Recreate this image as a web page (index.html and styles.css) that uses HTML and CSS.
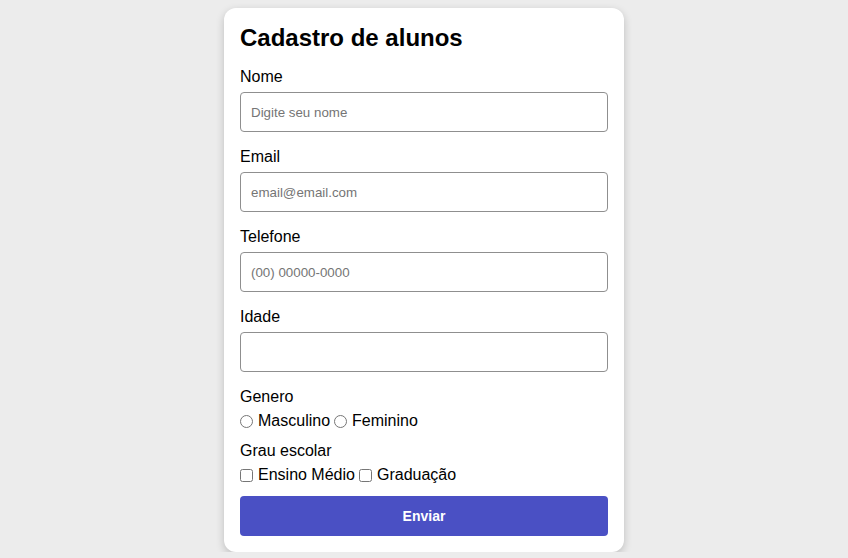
FILE: index.html
```html
<!DOCTYPE html>
<html lang="pt">
<head>
<meta charset="utf-8">
<title>Cadastro de alunos</title>
<link rel="stylesheet" href="styles.css">
</head>
<body>
<main class="card">
  <h2 class="title">Cadastro de alunos</h2>
  <form class="form">
    <div class="field">
      <label class="label" for="nome">Nome</label>
      <input class="input" id="nome" type="text" placeholder="Digite seu nome">
    </div>
    <div class="field">
      <label class="label" for="email">Email</label>
      <input class="input" id="email" type="email" placeholder="email@email.com">
    </div>
    <div class="field">
      <label class="label" for="tel">Telefone</label>
      <input class="input" id="tel" type="tel" placeholder="(00) 00000-0000">
    </div>
    <div class="field">
      <label class="label" for="idade">Idade</label>
      <input class="input" id="idade" type="number">
    </div>
    <div class="field field-choice">
      <span class="label">Genero</span>
      <div class="options">
        <label class="option"><input type="radio" name="genero" class="choice">Masculino</label>
        <label class="option"><input type="radio" name="genero" class="choice">Feminino</label>
      </div>
    </div>
    <div class="field field-choice">
      <span class="label">Grau escolar</span>
      <div class="options">
        <label class="option"><input type="checkbox" class="choice">Ensino Médio</label>
        <label class="option"><input type="checkbox" class="choice">Graduação</label>
      </div>
    </div>
    <button class="submit" type="button">Enviar</button>
  </form>
</main>
</body>
</html>
```
FILE: styles.css
```css
html, body {
  margin: 0;
  padding: 0;
}
body {
  background: #ececec;
  font-family: "Liberation Sans", Arial, sans-serif;
  color: #000;
  padding-top: 8px;
}
.card {
  width: 400px;
  box-sizing: border-box;
  margin: 0 auto;
  background: #fff;
  border-radius: 12px;
  padding: 16px;
  box-shadow: 0 3px 8px rgba(0, 0, 0, 0.2);
}
.title {
  margin: 0;
  font-size: 24px;
  font-weight: bold;
  line-height: 28px;
}
.form {
  display: flex;
  flex-direction: column;
  gap: 16px;
  margin-top: 16px;
}
.field {
  display: flex;
  flex-direction: column;
  gap: 6px;
}
.label {
  font-size: 16px;
  line-height: 18px;
}
.input {
  box-sizing: border-box;
  height: 40px;
  width: 100%;
  border: 1px solid #8f8f8f;
  border-radius: 4px;
  padding: 0 10px;
  font-family: "Liberation Sans", Arial, sans-serif;
  font-size: 13.333px;
  color: #000;
  background: #fff;
  outline: none;
}
.input::placeholder {
  color: #757575;
}
.field-choice {
  gap: 6px;
}
.field-choice + .field-choice {
  margin-top: -4px;
}
.options {
  display: flex;
  gap: 4px;
  font-size: 16px;
  line-height: 18px;
}
.option {
  display: flex;
  align-items: center;
  gap: 5px;
}
.choice {
  margin: 0;
  width: 13px;
  height: 13px;
}
.submit {
  height: 40px;
  border: none;
  border-radius: 4px;
  background: #4a50c4;
  color: #fff;
  font-family: "Liberation Sans", Arial, sans-serif;
  font-size: 14px;
  font-weight: bold;
  margin-top: -4px;
}
```
